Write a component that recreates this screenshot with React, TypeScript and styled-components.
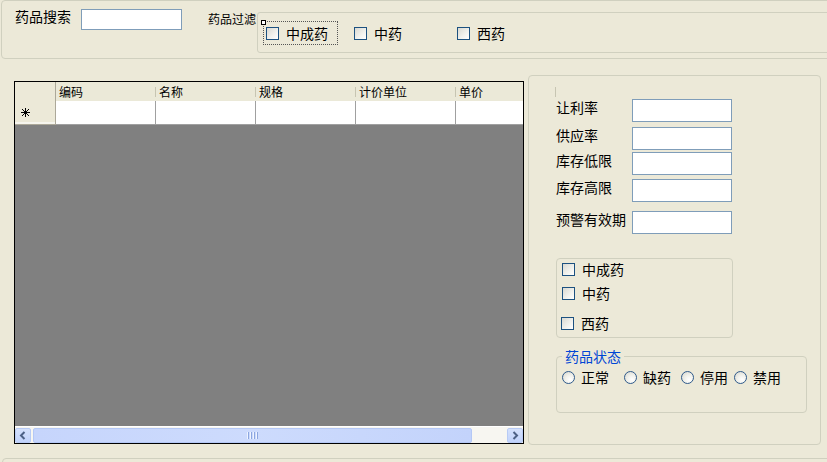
import styled, { createGlobalStyle } from "styled-components";

const GlobalStyle = createGlobalStyle`
  html, body {
    margin: 0;
    padding: 0;
  }
  body {
    background: #ece9d8;
    font-family: "Noto Sans CJK SC", "Liberation Sans", sans-serif;
    font-size: 14px;
    color: #000;
  }
`;

const Page = styled.div`
  width: 827px;
  height: 462px;
  overflow: hidden;
  background: #ece9d8;
`;

const GroupBox = styled.div`
  box-sizing: border-box;
  border: 1px solid #d0d0bf;
  border-radius: 4px;
`;

const TopGroup = styled(GroupBox)`
  margin-left: 1px;
  width: 860px;
  height: 59px;
  display: flex;
  align-items: flex-start;
`;

const SearchLabel = styled.span`
  margin: 7px 0 0 13px;
  width: 66px;
  line-height: 16px;
  white-space: nowrap;
`;

const TextBox = styled.input`
  box-sizing: border-box;
  width: ${(p) => p.width || 100}px;
  height: ${(p) => p.height || 23}px;
  border: 1px solid #7f9db9;
  background: #fff;
  margin: 0;
  padding: 0 2px;
  font: inherit;
`;

const SearchInput = styled(TextBox)`
  margin-top: 8px;
`;

const FilterLabel = styled.span`
  margin: 11px 0 0 26px;
  width: 49px;
  font-size: 12px;
  line-height: 14px;
  white-space: nowrap;
`;

const FilterGroup = styled(GroupBox)`
  position: relative;
  margin-top: 11px;
  flex: 1;
  height: 41px;
  border-radius: 3px;
  display: flex;
  align-items: flex-start;
  padding: 8px 0 0 5px;
`;

const Handle = styled.span`
  position: absolute;
  left: 3px;
  top: 7px;
  box-sizing: border-box;
  width: 5px;
  height: 5px;
  border: 1px solid #000;
  background: #fff;
`;

const CheckItem = styled.label<{ $w?: number; $focus?: boolean; $h?: number }>`
  box-sizing: border-box;
  display: flex;
  align-items: center;
  gap: 7px;
  width: ${(p) => (p.$w ? `${p.$w}px` : "auto")};
  height: ${(p) => p.$h || 24}px;
  padding-left: 2px;
  border: 1px dotted ${(p) => (p.$focus ? "#555" : "transparent")};
  white-space: nowrap;
  line-height: 16px;
`;

const CheckBox = styled.span`
  flex: none;
  box-sizing: border-box;
  width: 13px;
  height: 13px;
  border: 1px solid #1c5180;
  background: linear-gradient(135deg, #d9d9d2 0%, #f2f2ee 60%, #ffffff 100%);
`;

const MainRow = styled.div`
  display: flex;
  align-items: flex-start;
`;

const Grid = styled.div`
  box-sizing: border-box;
  margin: 22px 0 0 14px;
  width: 510px;
  height: 363px;
  border: 1px solid #000;
  display: flex;
  flex-direction: column;
  background: #808080;
  font-size: 12px;
`;

const HeaderRow = styled.div`
  display: flex;
  height: 19px;
  background: #ebe9d8;
`;

const RowHead = styled.div`
  box-sizing: border-box;
  flex: none;
  width: 41px;
  border-right: 1px solid #aca899;
  background: #ece9d8;
`;

const DataRowHead = styled(RowHead)`
  display: flex;
  align-items: center;
  padding-left: 6px;
  border-bottom: 1px solid #aca899;
  box-shadow: inset 0 -2px 0 #f6f5ee;
`;

const HeadCell = styled.div`
  position: relative;
  box-sizing: border-box;
  flex: none;
  width: 100px;
  padding-left: 3px;
  line-height: 19px;
  white-space: nowrap;

  &::after {
    content: "";
    position: absolute;
    right: 0;
    top: 5px;
    width: 1px;
    height: 10px;
    background: #c7c5b2;
  }
`;

const DataRow = styled.div`
  display: flex;
  height: 24px;
`;

const DataCell = styled.div`
  box-sizing: border-box;
  flex: none;
  width: 100px;
  background: #fff;
  border-right: 1px solid #a0a0a0;
  border-bottom: 1px solid #a0a0a0;
`;

const LastDataCell = styled(DataCell)`
  flex: 1;
  border-right: none;
`;

const GrayArea = styled.div`
  flex: 1;
  background: #808080;
`;

const HScroll = styled.div`
  display: flex;
  align-items: center;
  height: 16px;
  background: #f7f6f1;
  border-top: 1px solid #fff;
`;

const ArrowButton = styled.div`
  box-sizing: border-box;
  flex: none;
  width: 16px;
  height: 15px;
  border: 1px solid #b8cbf5;
  border-radius: 2px;
  background: linear-gradient(180deg, #d5e1fc 0%, #c1d3fb 100%);
  display: flex;
  align-items: center;
  justify-content: center;
`;

const Thumb = styled.div`
  box-sizing: border-box;
  margin-left: 2px;
  width: 439px;
  height: 15px;
  border: 1px solid #b4c8f6;
  border-radius: 2px;
  background: linear-gradient(90deg, #c6d5fc 0%, #cddbfd 50%, #c3d3fb 100%);
  display: flex;
  align-items: center;
  justify-content: center;
  gap: 1px;
`;

const Grip = styled.span`
  width: 1px;
  height: 7px;
  background: #eef3fe;
  border-right: 1px solid #8ca6e0;
`;

const Track = styled.div`
  flex: 1;
`;

const RightGroup = styled(GroupBox)`
  margin: 16px 0 0 4px;
  width: 293px;
  height: 370px;
  padding: 23px 0 0 27px;
`;

const FieldRow = styled.div<{ $gap: number }>`
  display: flex;
  align-items: flex-start;
  margin-top: ${(p) => p.$gap}px;
`;

const FieldLabel = styled.span`
  width: 76px;
  line-height: 16px;
  white-space: nowrap;
`;

const KindGroup = styled(GroupBox)`
  margin-top: 24px;
  width: 177px;
  height: 80px;
  padding: 2px 0 0 2px;
`;

const KindItem = styled(CheckItem)<{ $shift?: boolean; $top: number }>`
  height: 16px;
  margin-left: ${(p) => (p.$shift ? -1 : 0)}px;
  margin-top: ${(p) => p.$top}px;
`;

const StatusSet = styled.fieldset`
  margin: 10px 0 0 0;
  width: 251px;
  box-sizing: border-box;
  padding: 0 0 27px 5px;
  border: 1px solid #d0d0bf;
  border-radius: 4px;
  min-width: 0;
`;

const StatusLegend = styled.legend`
  padding: 0 3px;
  color: #0046d5;
  line-height: 16px;
`;

const RadioRow = styled.div`
  display: flex;
  align-items: center;
  margin-top: 5px;
  height: 16px;
`;

const RadioItem = styled.label<{ $w?: number }>`
  display: flex;
  align-items: center;
  gap: 6px;
  width: ${(p) => (p.$w ? `${p.$w}px` : "auto")};
  white-space: nowrap;
  line-height: 16px;
`;

const Radio = styled.span`
  flex: none;
  box-sizing: border-box;
  width: 13px;
  height: 13px;
  border-radius: 50%;
  border: 1px solid #2f5a8b;
  background: radial-gradient(circle at 65% 70%, #ffffff 0%, #f0f0ea 45%, #d4d4cc 100%);
`;

const BottomGroup = styled(GroupBox)`
  margin: 13px 0 0 2px;
  width: 860px;
  height: 30px;
`;

const Asterisk = () => (
  <svg width="9" height="9" viewBox="0 0 9 9" shapeRendering="crispEdges">
    <path d="M4.5 0V9M0 4.5H9M1 1L8 8M8 1L1 8" stroke="#000" strokeWidth="1" />
  </svg>
);

const LeftArrow = () => (
  <svg width="8" height="9" viewBox="0 0 8 9">
    <path d="M5.5 1L2 4.5L5.5 8" fill="none" stroke="#4d6185" strokeWidth="2" />
  </svg>
);

const RightArrow = () => (
  <svg width="8" height="9" viewBox="0 0 8 9">
    <path d="M2.5 1L6 4.5L2.5 8" fill="none" stroke="#4d6185" strokeWidth="2" />
  </svg>
);

const columns = ["编码", "名称", "规格", "计价单位", "单价"];

const fields = [
  { label: "让利率", gap: 0 },
  { label: "供应率", gap: 5 },
  { label: "库存低限", gap: 2 },
  { label: "库存高限", gap: 4 },
  { label: "预警有效期", gap: 9 },
];

const statuses = [
  { label: "正常", w: 62 },
  { label: "缺药", w: 57 },
  { label: "停用", w: 53 },
  { label: "禁用", w: 0 },
];

function App() {
  return (
    <>
      <GlobalStyle />
      <Page>
        <TopGroup>
          <SearchLabel>药品搜索</SearchLabel>
          <SearchInput width={101} height={21} />
          <FilterLabel>药品过滤</FilterLabel>
          <FilterGroup>
            <Handle />
            <CheckItem $w={75} $focus>
              <CheckBox />
              中成药
            </CheckItem>
            <CheckItem $w={103} style={{ marginLeft: 13 }}>
              <CheckBox />
              中药
            </CheckItem>
            <CheckItem>
              <CheckBox />
              西药
            </CheckItem>
          </FilterGroup>
        </TopGroup>

        <MainRow>
          <Grid>
            <HeaderRow>
              <RowHead />
              {columns.map((c) => (
                <HeadCell key={c}>{c}</HeadCell>
              ))}
            </HeaderRow>
            <DataRow>
              <DataRowHead>
                <Asterisk />
              </DataRowHead>
              <DataCell />
              <DataCell />
              <DataCell />
              <DataCell />
              <LastDataCell />
            </DataRow>
            <GrayArea />
            <HScroll>
              <ArrowButton>
                <LeftArrow />
              </ArrowButton>
              <Thumb>
                <Grip />
                <Grip />
                <Grip />
                <Grip />
              </Thumb>
              <Track />
              <ArrowButton>
                <RightArrow />
              </ArrowButton>
            </HScroll>
          </Grid>

          <RightGroup>
            {fields.map((f) => (
              <FieldRow key={f.label} $gap={f.gap}>
                <FieldLabel>{f.label}</FieldLabel>
                <TextBox width={100} height={23} />
              </FieldRow>
            ))}

            <KindGroup>
              <KindItem $top={0}>
                <CheckBox />
                中成药
              </KindItem>
              <KindItem $top={8}>
                <CheckBox />
                中药
              </KindItem>
              <KindItem $top={14} $shift>
                <CheckBox />
                西药
              </KindItem>
            </KindGroup>

            <StatusSet>
              <StatusLegend>药品状态</StatusLegend>
              <RadioRow>
                {statuses.map((s) => (
                  <RadioItem key={s.label} $w={s.w || undefined}>
                    <Radio />
                    {s.label}
                  </RadioItem>
                ))}
              </RadioRow>
            </StatusSet>
          </RightGroup>
        </MainRow>

        <BottomGroup />
      </Page>
    </>
  );
}

export default App;
